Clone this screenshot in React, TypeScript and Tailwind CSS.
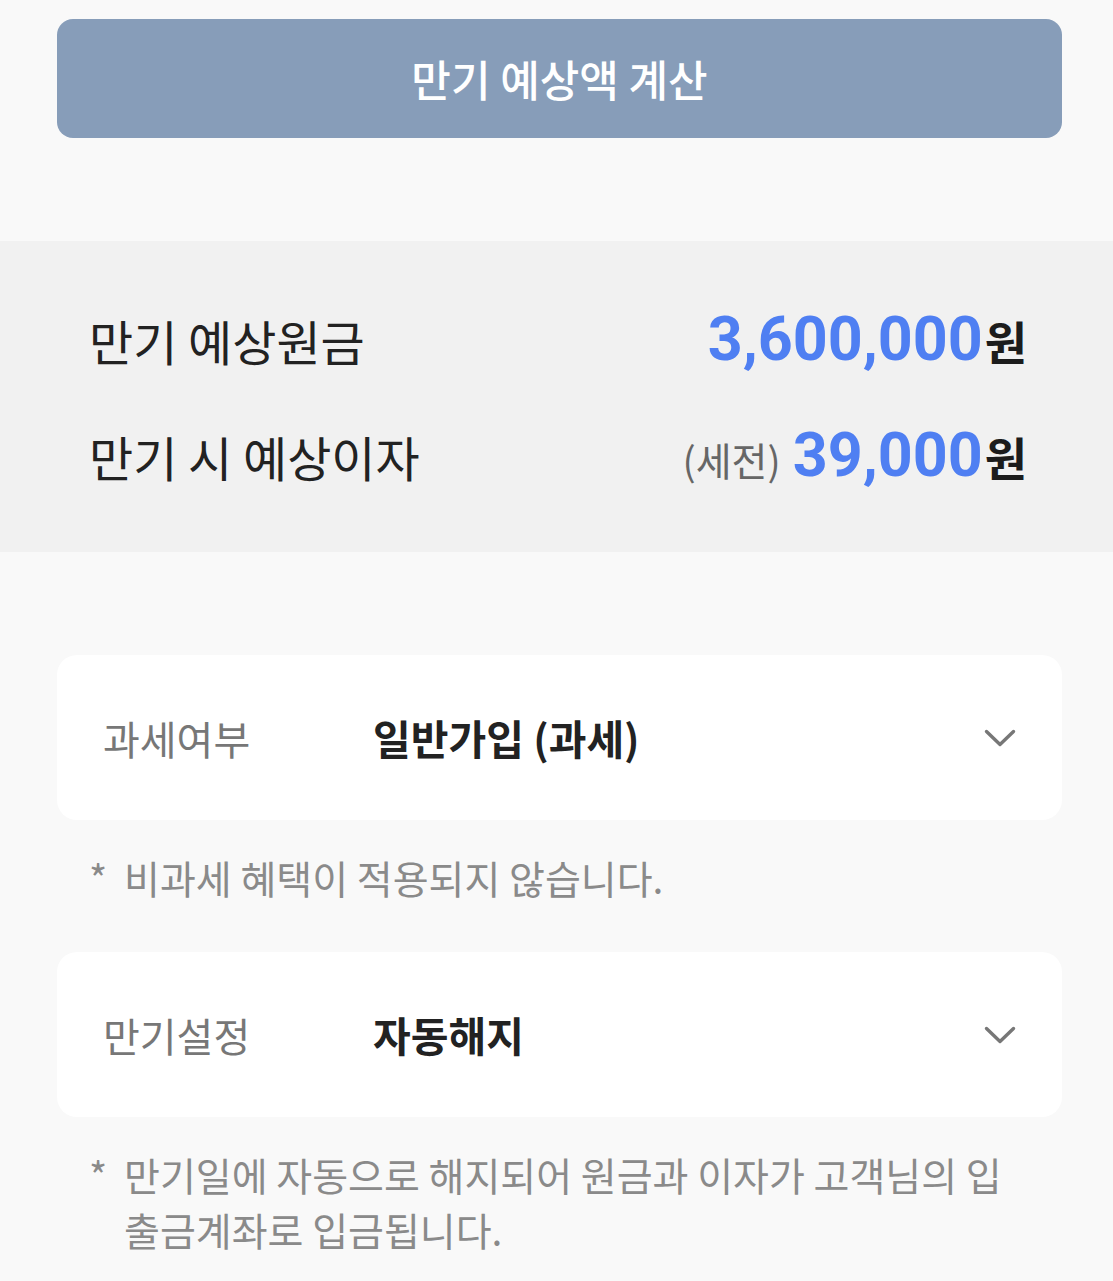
import { ReactNode } from "react";

const KR = { fontFamily: '"Noto Sans CJK KR", "Noto Sans", sans-serif' };
const NUM = { fontFamily: 'Roboto, "Noto Sans CJK KR", sans-serif' };

function Chevron() {
    return (
        <svg width="34" height="20" viewBox="0 0 34 20" fill="none">
            <path d="M3.5 3.5 L17 16.5 L30.5 3.5" stroke="#777777" strokeWidth="3.4" strokeLinecap="round" strokeLinejoin="round" />
        </svg>
    );
}

function SelectCard({ label, value }: { label: string; value: string }) {
    return (
        <div className="ml-[57px] mr-[51px] h-[165px] rounded-[20px] bg-white flex items-center pl-[46px] pr-[45px]">
            <div className="w-[270px] text-[40px] text-[#777777]">{label}</div>
            <div className="flex-1 text-[41px] font-bold text-[#222222]">{value}</div>
            <Chevron />
        </div>
    );
}

function Note({ children }: { children: ReactNode }) {
    return (
        <div className="flex pl-[89px] pr-[60px] mt-[30px] text-[39px] leading-[55px] text-[#8a8a8a]">
            <span className="w-[35px] shrink-0">*</span>
            <span>{children}</span>
        </div>
    );
}

export default function App() {
    return (
        <div className="min-h-[1281px] w-full bg-[#f9f9f9] pt-[19px] pb-[40px]" style={KR}>
            <div className="ml-[57px] mr-[51px] h-[119px] rounded-[16px] bg-[#879db9] flex items-center justify-center">
                <span className="text-[43px] font-medium text-white">만기 예상액 계산</span>
            </div>

            <div className="mt-[103px] bg-[#f1f1f1] pt-[41px] pb-[38px] pl-[89px] pr-[86px]">
                <div className="h-[116px] flex items-center justify-between">
                    <span className="text-[48px] text-[#222222]">만기 예상원금</span>
                    <span className="flex items-baseline">
                        <span className="text-[61px] font-bold text-[#4f7ff2]" style={NUM}>3,600,000</span>
                        <span className="text-[46px] font-bold text-[#1c1c1c] ml-[2px]">원</span>
                    </span>
                </div>
                <div className="h-[116px] flex items-center justify-between">
                    <span className="text-[48px] text-[#222222]">만기 시 예상이자</span>
                    <span className="flex items-baseline">
                        <span className="text-[39px] text-[#666666] mr-[12px]">(세전)</span>
                        <span className="text-[61px] font-bold text-[#4f7ff2]" style={NUM}>39,000</span>
                        <span className="text-[46px] font-bold text-[#1c1c1c] ml-[2px]">원</span>
                    </span>
                </div>
            </div>

            <div className="mt-[103px]">
                <SelectCard label="과세여부" value="일반가입 (과세)" />
            </div>
            <Note>비과세 혜택이 적용되지 않습니다.</Note>

            <div className="mt-[47px]">
                <SelectCard label="만기설정" value="자동해지" />
            </div>
            <Note>
                만기일에 자동으로 해지되어 원금과 이자가 고객님의 입
                <br />
                출금계좌로 입금됩니다.
            </Note>
        </div>
    );
}
